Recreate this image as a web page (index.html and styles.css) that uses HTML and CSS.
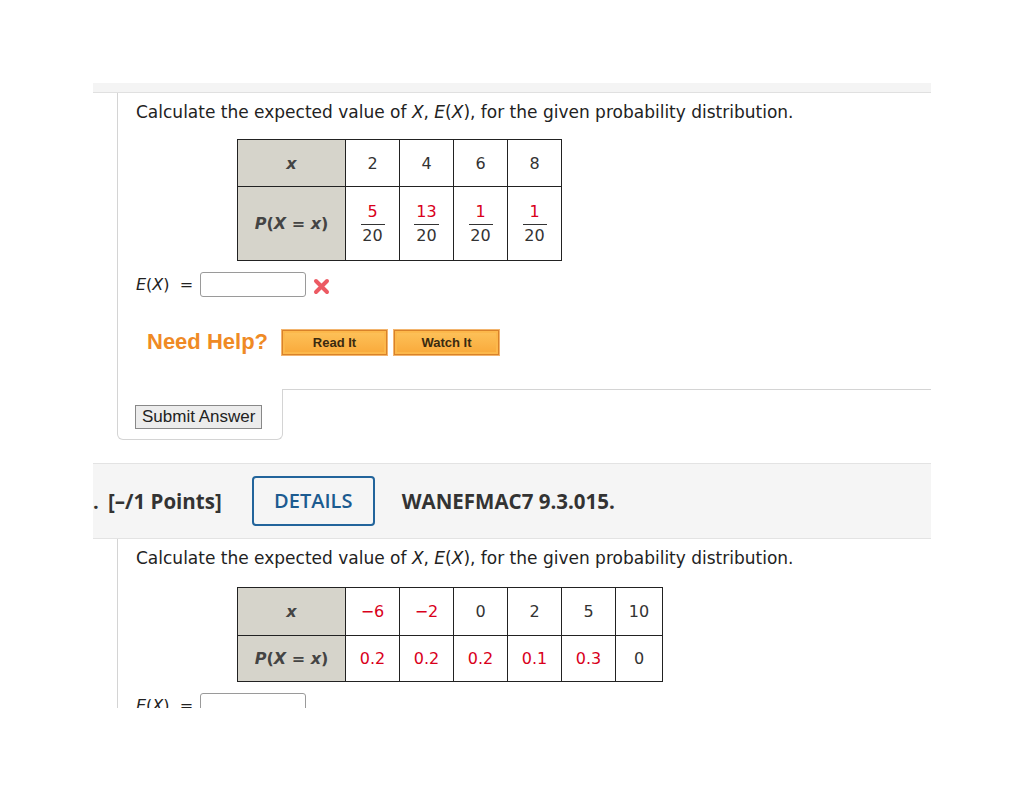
FILE: index.html
```html
<!DOCTYPE html>
<html>
<head>
<meta charset="utf-8">
<link rel="stylesheet" href="styles.css">
</head>
<body>
<div class="page">
  <div class="strip"></div>
  <div class="q q1">
    <p class="prompt">Calculate the expected value of <i>X</i>, <i>E</i>(<i>X</i>), for the given probability distribution.</p>
    <table class="dist dist1">
      <tr class="r1">
        <th><i>x</i></th>
        <td>2</td><td>4</td><td>6</td><td>8</td>
      </tr>
      <tr class="r2">
        <th><i>P</i>(<i>X</i> = <i>x</i>)</th>
        <td><span class="frac"><span class="num">5</span><span class="den">20</span></span></td>
        <td><span class="frac"><span class="num">13</span><span class="den">20</span></span></td>
        <td><span class="frac"><span class="num">1</span><span class="den">20</span></span></td>
        <td><span class="frac"><span class="num">1</span><span class="den">20</span></span></td>
      </tr>
    </table>
    <div class="answer">
      <span class="elabel"><i>E</i>(<i>X</i>) &nbsp;=</span>
      <span class="input"></span>
      <svg class="wrong" width="17" height="17" viewBox="0 0 17 17"><path d="M3 3 L14 14 M14 3 L3 14" stroke="#ec5a63" stroke-width="4" stroke-linecap="round"/></svg>
    </div>
    <div class="help">
      <span class="needhelp">Need Help?</span>
      <span class="hbtn">Read It</span>
      <span class="hbtn">Watch It</span>
    </div>
  </div>
  <div class="footer">
    <div class="submitcell"><span class="submit">Submit Answer</span></div>
    <div class="footrest"></div>
  </div>
  <div class="qhead">
    <span class="dot">.</span>
    <span class="points">[–/1 Points]</span>
    <span class="details">DETAILS</span>
    <span class="code">WANEFMAC7 9.3.015.</span>
  </div>
  <div class="q q2">
    <p class="prompt">Calculate the expected value of <i>X</i>, <i>E</i>(<i>X</i>), for the given probability distribution.</p>
    <table class="dist dist2">
      <tr class="r1b">
        <th><i>x</i></th>
        <td class="red">−6</td><td class="red">−2</td><td>0</td><td>2</td><td>5</td><td>10</td>
      </tr>
      <tr class="r2b">
        <th><i>P</i>(<i>X</i> = <i>x</i>)</th>
        <td class="red">0.2</td><td class="red">0.2</td><td class="red">0.2</td><td class="red">0.1</td><td class="red">0.3</td><td>0</td>
      </tr>
    </table>
    <div class="answer answer2">
      <span class="elabel"><i>E</i>(<i>X</i>) &nbsp;=</span>
      <span class="input"></span>
    </div>
  </div>
</div>
</body>
</html>
```
FILE: styles.css
```css
html, body { margin: 0; padding: 0; background: #fff; }
.page {
  margin-left: 93px;
  width: 838px;
  padding-top: 83px;
  height: 625px;
  overflow: hidden;
  font-family: "DejaVu Sans", Verdana, sans-serif;
  color: #222;
}
.strip { height: 9px; background: #f4f4f4; border-bottom: 1px solid #e0e0e0; }
.q { margin-left: 24px; border-left: 1px solid #d4d4d4; padding-left: 18px; }
.prompt { margin: 0; font-size: 17px; line-height: 20px; padding-top: 9px; color: #222; }
.dist { border-collapse: collapse; margin-left: 101px; font-size: 16px; color: #333; }
.dist1 { margin-top: 17px; }
.dist2 { margin-top: 19px; }
.dist th {
  background: #d6d4cb;
  border: 1px solid #222;
  width: 107px;
  padding: 0;
  font-weight: bold;
  color: #444;
  text-align: center;
}
.dist td { border: 1px solid #222; width: 53px; padding: 0; text-align: center; }
.dist2 td:last-child { width: 46px; }
.r1 th, .r1 td { height: 46px; }
.r1b th, .r1b td { height: 47px; }
.r2 th, .r2 td { height: 73px; }
.r2b th, .r2b td { height: 45px; }
.red { color: #d9001b; }
.frac { display: inline-flex; flex-direction: column; align-items: center; vertical-align: middle; }
.num { color: #d9001b; line-height: 18px; padding: 0 2px 3px; border-bottom: 1.5px solid #333; min-width: 20px; }
.den { line-height: 18px; padding-top: 2px; }
.answer { display: flex; align-items: center; margin-top: 10px; height: 26px; font-size: 16px; }
.elabel { width: 64px; color: #222; }
.input { width: 104px; height: 23px; border: 1px solid #9a9a9a; border-radius: 3px; background: #fff; }
.wrong { margin-left: 7px; margin-top: 4px; }
.help { display: flex; align-items: center; margin-top: 31px; padding-left: 11px; height: 28px; padding-bottom: 33px; }
.needhelp { font-family: "Liberation Sans", Arial, sans-serif; font-weight: bold; font-size: 22px; color: #ef8a25; margin-right: 14px; }
.hbtn {
  font-family: "Liberation Sans", Arial, sans-serif;
  font-weight: bold; font-size: 13px; color: #3a2a10;
  width: 103px; height: 23px; line-height: 23px; text-align: center;
  background: linear-gradient(#fdc25a, #f9a93a);
  border: 1px solid #d9822a;
  box-shadow: inset 0 0 0 2px #fcb84b, 0 0 0 1px #f3b56e;
  margin-right: 7px;
}
.footer { display: flex; height: 51px; }
.submitcell {
  margin-left: 24px; width: 166px;
  border: 1px solid #d4d4d4; border-top: none;
  border-radius: 0 0 6px 6px;
  padding-left: 17px; padding-top: 16px; box-sizing: border-box;
}
.submit {
  display: inline-block;
  font-family: "Liberation Sans", Arial, sans-serif; font-size: 17px; color: #222;
  background: #ececec; border: 1px solid #888;
  padding: 0 6px; height: 22px; line-height: 22px;
}
.footrest { flex: 1; border-top: 1px solid #d4d4d4; }
.qhead {
  margin-top: 23px;
  height: 74px;
  background: #f5f5f5;
  border-top: 1px solid #e3e3e3; border-bottom: 1px solid #e3e3e3;
  display: flex; align-items: center;
  font-family: "Open Sans", sans-serif; color: #333;
}
.dot { width: 15px; font-weight: bold; font-size: 20px; margin-left: 0; }
.points { font-weight: bold; font-size: 20.5px; margin-right: 30px; }
.details {
  border: 2px solid #22649b; border-radius: 4px; color: #1c5b90;
  font-size: 20px; font-weight: 600;
  width: 119px; height: 46px; line-height: 46px; text-align: center;
  margin-right: 27px; box-sizing: content-box;
}
.code { font-weight: bold; font-size: 20.5px; }
.answer2 { margin-top: 10px; }
```
